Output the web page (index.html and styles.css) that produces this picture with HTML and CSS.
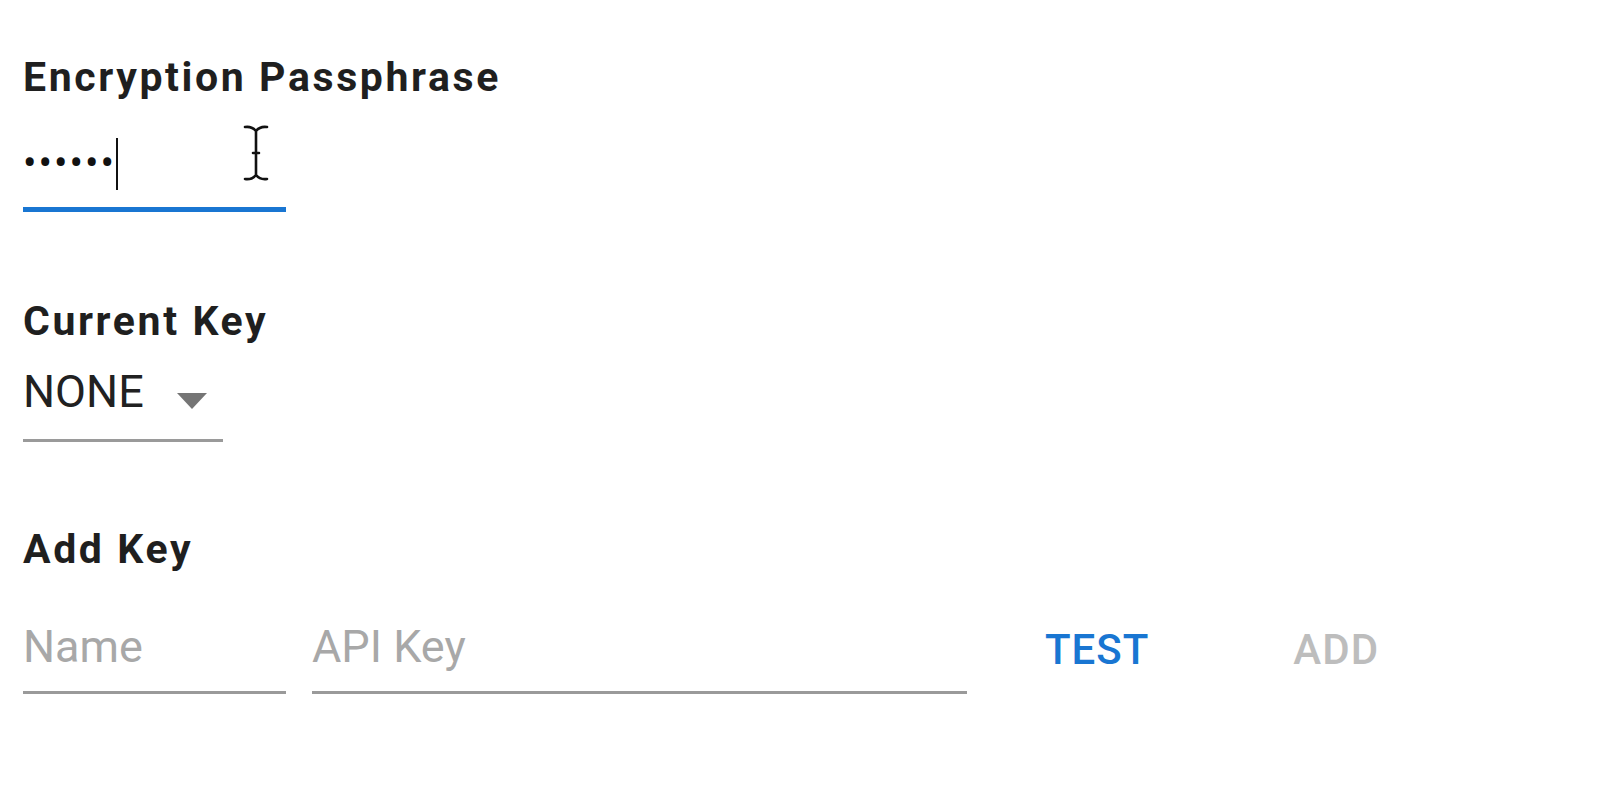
FILE: index.html
```html
<!DOCTYPE html>
<html lang="en">
<head>
    <meta charset="UTF-8">
    <title>Key Settings</title>
    <link rel="stylesheet" href="styles.css">
</head>
<body>
    <div class="settings">
        <div class="label">Encryption Passphrase</div>
        <div class="text-field pass-field">
            <span class="dots">••••••</span><span class="caret"></span>
            <svg class="ibeam" width="26" height="56" viewBox="0 0 26 56">
                <path d="M2 2 Q9 1 13 6 Q17 1 24 2 M13 6 V50 M2 54 Q9 55 13 50 Q17 55 24 54 M10 28 H16" fill="none" stroke="#111" stroke-width="2.6" stroke-linecap="round"/>
            </svg>
        </div>

        <div class="label label-gap">Current Key</div>
        <div class="select-field">
            <span class="select-value">NONE</span>
            <span class="select-arrow"></span>
        </div>

        <div class="label label-gap-add">Add Key</div>
        <div class="add-row">
            <input type="text" class="key-input name-input" placeholder="Name">
            <input type="text" class="key-input api-input" placeholder="API Key">
            <button class="btn btn-test">TEST</button>
            <button class="btn btn-add" disabled>ADD</button>
        </div>
    </div>
</body>
</html>
```

FILE: styles.css
```css
body {
    margin: 0;
    background: #fff;
    font-family: Roboto, "Liberation Sans", sans-serif;
    color: #212121;
}
.settings {
    padding: 53px 0 0 23px;
}
.label {
    font-size: 41px;
    font-weight: bold;
    line-height: 48px;
    letter-spacing: 2.6px;
    color: #1f1f1f;
}
.label-gap {
    margin-top: 85px;
}
.label-gap-add {
    margin-top: 83px;
}
.text-field {
    position: relative;
    width: 263px;
}
.pass-field {
    height: 106px;
    box-sizing: content-box;
    display: flex;
    align-items: flex-end;
    border-bottom: 5px solid #1976d2;
}
.dots {
    font-size: 40px;
    line-height: 52px;
    margin-bottom: 17px;
    letter-spacing: 2px;
    color: #111;
}
.caret {
    width: 2px;
    height: 52px;
    margin-bottom: 17px;
    background: #111;
}
.ibeam {
    position: absolute;
    left: 220px;
    top: 24px;
}
.select-field {
    margin-top: 20px;
    width: 200px;
    height: 74px;
    display: flex;
    align-items: flex-start;
    border-bottom: 3px solid #9a9a9a;
}
.select-value {
    font-size: 45px;
    line-height: 53px;
    color: #212121;
}
.select-arrow {
    margin: 28px 0 0 33px;
    width: 0;
    height: 0;
    border-left: 15px solid transparent;
    border-right: 15px solid transparent;
    border-top: 16px solid #757575;
}
.add-row {
    display: flex;
    align-items: flex-end;
}
.key-input {
    box-sizing: border-box;
    height: 121px;
    padding: 29px 0 0 0;
    border: none;
    border-bottom: 3px solid #9a9a9a;
    font-family: Roboto, "Liberation Sans", sans-serif;
    font-size: 45px;
    color: #212121;
    background: transparent;
    outline: none;
}
.key-input::placeholder {
    color: #a8a8a8;
}
.name-input {
    width: 263px;
}
.api-input {
    width: 655px;
    margin-left: 26px;
}
.btn {
    border: none;
    background: none;
    padding: 0;
    font-family: Roboto, "Liberation Sans", sans-serif;
    font-size: 42px;
    font-weight: 500;
    line-height: 48px;
    letter-spacing: 1px;
    margin-bottom: 20px;
    cursor: pointer;
}
.btn-test {
    color: #1976d2;
    margin-left: 78px;
}
.btn-add {
    color: #bdbdbd;
    margin-left: 144px;
    cursor: default;
}
```
